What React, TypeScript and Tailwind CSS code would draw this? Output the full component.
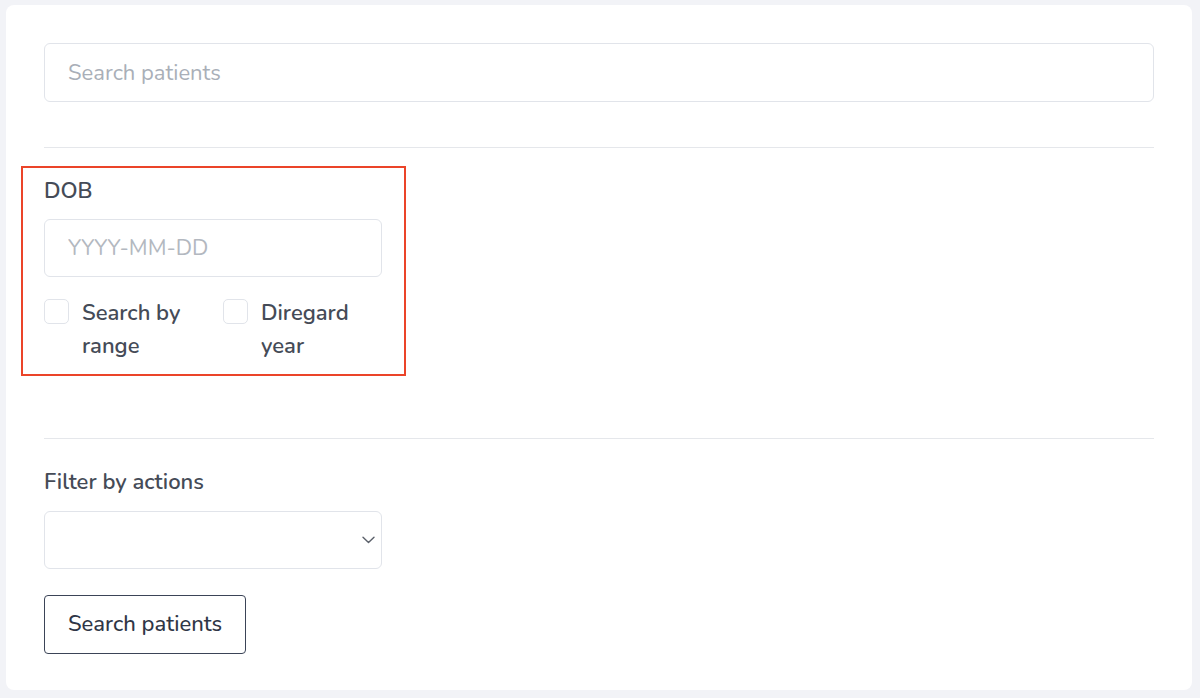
import React, { useState } from 'react';

const font = { fontFamily: '"Nunito", Lato, "Open Sans", sans-serif' };

function Check({ label, checked, onChange }: { label: string; checked: boolean; onChange: () => void }) {
  return (
    <label className="flex items-start gap-[13px] cursor-pointer">
      <span
        onClick={onChange}
        className={`mt-[2px] h-[25px] w-[25px] shrink-0 rounded-[5px] border-[1.5px] ${checked ? 'border-[#3b4457] bg-[#3b4457]' : 'border-[#e1e4ea] bg-white'}`}
      />
      <span className="w-[118px] text-[22px] leading-[33px] font-semibold text-[#454b57]">{label}</span>
    </label>
  );
}

export default function App() {
  const [range, setRange] = useState(false);
  const [ignoreYear, setIgnoreYear] = useState(false);

  return (
    <div className="min-h-screen bg-[#f2f3f7] pl-[6px] pr-[8px] pt-[5px] pb-[8px]" style={font}>
      <div className="rounded-[8px] bg-white px-[38px] pt-[38px] pb-[36px]">
        <input
          placeholder="Search patients"
          className="block h-[59px] w-full rounded-[6px] border-[1.5px] border-[#e1e4ea] px-[23px] text-[22px] text-[#454b57] placeholder:text-[#a9afb8] outline-none"
        />

        <div className="mt-[45px] border-t-[1.5px] border-[#e5e7eb]" />

        <div className="mt-[18px] -ml-[23px] w-[385px] border-2 border-[#eb4429] pl-[21px] pr-[22px] pt-[7px] pb-[11px]">
          <div className="text-[22px] leading-[33px] font-semibold text-[#454b57]">DOB</div>
          <input
            placeholder="YYYY-MM-DD"
            className="mt-[11px] block h-[58px] w-full rounded-[6px] border-[1.5px] border-[#e1e4ea] px-[23px] text-[22px] text-[#454b57] placeholder:text-[#b3b8c0] outline-none"
          />
          <div className="mt-[20px] flex">
            <div className="w-[179px]">
              <Check label="Search by range" checked={range} onChange={() => setRange(!range)} />
            </div>
            <Check label="Diregard year" checked={ignoreYear} onChange={() => setIgnoreYear(!ignoreYear)} />
          </div>
        </div>

        <div className="mt-[62px] border-t-[1.5px] border-[#e5e7eb]" />

        <div className="mt-[27px] text-[22px] leading-[33px] font-semibold text-[#454b57]">Filter by actions</div>
        <div className="relative mt-[12px] w-[338px]">
          <select className="block h-[58px] w-full appearance-none rounded-[6px] border-[1.5px] border-[#e1e4ea] bg-white px-[23px] text-[22px] text-[#454b57] outline-none">
            <option value=""></option>
            <option value="called">Called</option>
            <option value="emailed">Emailed</option>
          </select>
          <svg className="pointer-events-none absolute right-[7px] top-[25px]" width="13" height="8" viewBox="0 0 13 8" fill="none">
            <path d="M1 1.2L6.5 6.5L12 1.2" stroke="#5b606a" strokeWidth="1.4" strokeLinecap="round" strokeLinejoin="round" />
          </svg>
        </div>

        <button className="mt-[26px] h-[59px] rounded-[4px] border-[1.5px] border-[#3b4457] bg-white px-[23px] text-[22px] font-medium text-[#2f3646]">
          Search patients
        </button>
      </div>
    </div>
  );
}
